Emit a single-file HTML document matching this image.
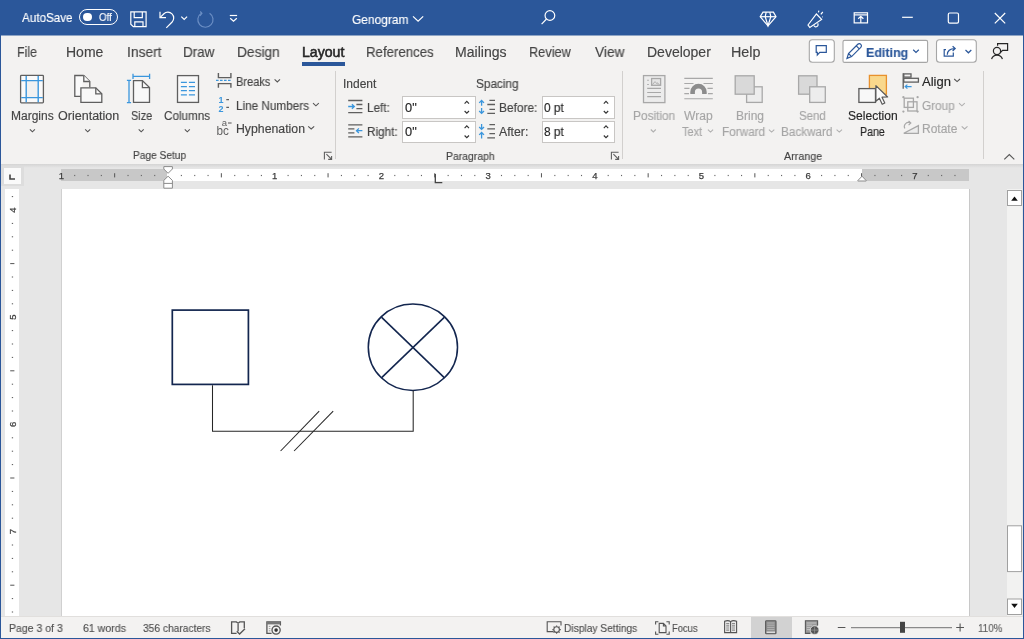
<!DOCTYPE html>
<html><head><meta charset="utf-8"><style>
html,body{margin:0;padding:0;width:1024px;height:639px;overflow:hidden;background:#f3f2f1;position:relative;font-family:"Liberation Sans", sans-serif}
.t{position:absolute;white-space:nowrap;line-height:1;font-family:"Liberation Sans", sans-serif;-webkit-text-stroke:0.15px currentColor;will-change:transform}
svg{overflow:visible}
</style></head><body>
<div style="position:absolute;left:0px;top:0px;width:1024px;height:35px;background:#2b579a"></div>
<div style="position:absolute;left:0px;top:35px;width:1024px;height:1px;background:#8fa5c5"></div>
<div style="position:absolute;left:0px;top:36px;width:1024px;height:128px;background:#f3f2f1"></div>
<div style="position:absolute;left:0px;top:164px;width:1024px;height:453px;background:#e6e6e6"></div>
<div style="position:absolute;left:0px;top:616px;width:1024px;height:23px;background:#f3f2f1"></div>
<div class="t" style="left:22.20px;top:12.00px;font-size:12.6px;color:#fff;font-weight:400;transform:scaleX(0.9266);transform-origin:0 0;">AutoSave</div>
<div style="position:absolute;left:79px;top:9px;width:38.6px;height:16.2px;border:1.2px solid #fff;border-radius:9px;box-sizing:border-box"></div>
<div style="position:absolute;left:83.4px;top:12.9px;width:8.2px;height:8.2px;background:#fff;border-radius:50%"></div>
<div class="t" style="left:98.60px;top:12.00px;font-size:10.6px;color:#fff;font-weight:400;transform:scaleX(0.9220);transform-origin:0 0;">Off</div>
<div class="t" style="left:351.70px;top:13.00px;font-size:13px;color:#fff;font-weight:400;transform:scaleX(0.9209);transform-origin:0 0;">Genogram</div>
<div class="t" style="left:17.31px;top:45.00px;font-size:14px;color:#444;font-weight:400;transform:scaleX(0.8864);transform-origin:0 0;">File</div>
<div class="t" style="left:66.40px;top:45.00px;font-size:14px;color:#444;font-weight:400;">Home</div>
<div class="t" style="left:126.52px;top:45.00px;font-size:14px;color:#444;font-weight:400;transform:scaleX(0.9846);transform-origin:0 0;">Insert</div>
<div class="t" style="left:183.04px;top:45.00px;font-size:14px;color:#444;font-weight:400;transform:scaleX(0.9613);transform-origin:0 0;">Draw</div>
<div class="t" style="left:237.22px;top:45.00px;font-size:14px;color:#444;font-weight:400;transform:scaleX(0.9810);transform-origin:0 0;">Design</div>
<div class="t" style="left:301.59px;top:45.00px;font-size:14px;color:#262626;font-weight:400;transform:scaleX(1.0062);transform-origin:0 0;-webkit-text-stroke:0.55px #262626">Layout</div>
<div class="t" style="left:365.75px;top:45.00px;font-size:14px;color:#444;font-weight:400;transform:scaleX(0.9463);transform-origin:0 0;">References</div>
<div class="t" style="left:455.30px;top:45.00px;font-size:14px;color:#444;font-weight:400;transform:scaleX(1.0049);transform-origin:0 0;">Mailings</div>
<div class="t" style="left:529.29px;top:45.00px;font-size:14px;color:#444;font-weight:400;transform:scaleX(0.9106);transform-origin:0 0;">Review</div>
<div class="t" style="left:595.20px;top:45.00px;font-size:14px;color:#444;font-weight:400;transform:scaleX(0.9780);transform-origin:0 0;">View</div>
<div class="t" style="left:646.51px;top:45.00px;font-size:14px;color:#444;font-weight:400;transform:scaleX(0.9944);transform-origin:0 0;">Developer</div>
<div class="t" style="left:731.28px;top:45.00px;font-size:14px;color:#444;font-weight:400;transform:scaleX(1.0212);transform-origin:0 0;">Help</div>
<div style="position:absolute;left:302px;top:62px;width:43px;height:4px;background:#2b579a"></div>
<div class="t" style="left:10.70px;top:110.00px;font-size:12px;color:#444;font-weight:400;">Margins</div>
<div class="t" style="left:57.60px;top:110.00px;font-size:12px;color:#444;font-weight:400;transform:scaleX(1.0444);transform-origin:0 0;">Orientation</div>
<div class="t" style="left:130.60px;top:110.00px;font-size:12px;color:#444;font-weight:400;transform:scaleX(0.9083);transform-origin:0 0;">Size</div>
<div class="t" style="left:164.40px;top:110.00px;font-size:12px;color:#444;font-weight:400;transform:scaleX(0.9736);transform-origin:0 0;">Columns</div>
<div class="t" style="left:236.00px;top:76.00px;font-size:12px;color:#444;font-weight:400;transform:scaleX(0.9211);transform-origin:0 0;">Breaks</div>
<div class="t" style="left:236.00px;top:100.00px;font-size:12px;color:#444;font-weight:400;transform:scaleX(0.9772);transform-origin:0 0;">Line Numbers</div>
<div class="t" style="left:236.00px;top:123.00px;font-size:12px;color:#444;font-weight:400;transform:scaleX(1.0239);transform-origin:0 0;">Hyphenation</div>
<div class="t" style="left:132.80px;top:150.00px;font-size:10.8px;color:#444;font-weight:400;transform:scaleX(0.9393);transform-origin:0 0;">Page Setup</div>
<div class="t" style="left:343.40px;top:78.00px;font-size:12px;color:#444;font-weight:400;">Indent</div>
<div class="t" style="left:367.00px;top:102.00px;font-size:12px;color:#444;font-weight:400;transform:scaleX(0.9733);transform-origin:0 0;">Left:</div>
<div class="t" style="left:367.00px;top:126.00px;font-size:12px;color:#444;font-weight:400;transform:scaleX(0.9770);transform-origin:0 0;">Right:</div>
<div class="t" style="left:476.30px;top:78.00px;font-size:12px;color:#444;font-weight:400;transform:scaleX(0.9815);transform-origin:0 0;">Spacing</div>
<div class="t" style="left:499.00px;top:102.00px;font-size:12px;color:#444;font-weight:400;transform:scaleX(0.9907);transform-origin:0 0;">Before:</div>
<div class="t" style="left:499.00px;top:126.00px;font-size:12px;color:#444;font-weight:400;transform:scaleX(1.0232);transform-origin:0 0;">After:</div>
<div class="t" style="left:446.40px;top:151.00px;font-size:10.8px;color:#444;font-weight:400;transform:scaleX(0.9640);transform-origin:0 0;">Paragraph</div>
<div class="t" style="left:633.30px;top:110.00px;font-size:12px;color:#a6a6a6;font-weight:400;transform:scaleX(0.9877);transform-origin:0 0;">Position</div>
<div class="t" style="left:684.20px;top:110.00px;font-size:12px;color:#a6a6a6;font-weight:400;transform:scaleX(1.0077);transform-origin:0 0;">Wrap</div>
<div class="t" style="left:682.30px;top:126.00px;font-size:12px;color:#a6a6a6;font-weight:400;transform:scaleX(0.9129);transform-origin:0 0;">Text</div>
<div class="t" style="left:735.50px;top:110.00px;font-size:12px;color:#a6a6a6;font-weight:400;">Bring</div>
<div class="t" style="left:721.80px;top:126.00px;font-size:12px;color:#a6a6a6;font-weight:400;transform:scaleX(0.9807);transform-origin:0 0;">Forward</div>
<div class="t" style="left:799.00px;top:110.00px;font-size:12px;color:#a6a6a6;font-weight:400;transform:scaleX(0.9542);transform-origin:0 0;">Send</div>
<div class="t" style="left:780.60px;top:126.00px;font-size:12px;color:#a6a6a6;font-weight:400;transform:scaleX(0.9767);transform-origin:0 0;">Backward</div>
<div class="t" style="left:847.50px;top:110.00px;font-size:12px;color:#262626;font-weight:400;transform:scaleX(1.0063);transform-origin:0 0;">Selection</div>
<div class="t" style="left:859.50px;top:126.00px;font-size:12px;color:#262626;font-weight:400;transform:scaleX(0.8853);transform-origin:0 0;">Pane</div>
<div class="t" style="left:922.00px;top:76.00px;font-size:12px;color:#262626;font-weight:400;transform:scaleX(1.0881);transform-origin:0 0;">Align</div>
<div class="t" style="left:922.00px;top:100.00px;font-size:12px;color:#a6a6a6;font-weight:400;transform:scaleX(0.9799);transform-origin:0 0;">Group</div>
<div class="t" style="left:922.00px;top:123.00px;font-size:12px;color:#a6a6a6;font-weight:400;">Rotate</div>
<div class="t" style="left:784.40px;top:151.00px;font-size:10.8px;color:#444;font-weight:400;transform:scaleX(0.9894);transform-origin:0 0;">Arrange</div>
<div style="position:absolute;left:402px;top:96px;width:73.5px;height:22.5px;background:#fff;border:1px solid #c8c6c4;box-sizing:border-box"></div>
<div class="t" style="left:404.60px;top:102.00px;font-size:12px;color:#262626;font-weight:400;transform:scaleX(1.0680);transform-origin:0 0;">0"</div>
<div style="position:absolute;left:402px;top:120.5px;width:73.5px;height:22.5px;background:#fff;border:1px solid #c8c6c4;box-sizing:border-box"></div>
<div class="t" style="left:404.60px;top:126.00px;font-size:12px;color:#262626;font-weight:400;transform:scaleX(1.0680);transform-origin:0 0;">0"</div>
<div style="position:absolute;left:541.5px;top:96px;width:73.5px;height:22.5px;background:#fff;border:1px solid #c8c6c4;box-sizing:border-box"></div>
<div class="t" style="left:544.40px;top:102.00px;font-size:12px;color:#262626;font-weight:400;transform:scaleX(0.9815);transform-origin:0 0;">0 pt</div>
<div style="position:absolute;left:541.5px;top:120.5px;width:73.5px;height:22.5px;background:#fff;border:1px solid #c8c6c4;box-sizing:border-box"></div>
<div class="t" style="left:544.40px;top:126.00px;font-size:12px;color:#262626;font-weight:400;transform:scaleX(0.9815);transform-origin:0 0;">8 pt</div>
<div style="position:absolute;left:335px;top:71px;width:1px;height:88px;background:#d2d0ce"></div>
<div style="position:absolute;left:622px;top:71px;width:1px;height:88px;background:#d2d0ce"></div>
<div style="position:absolute;left:983px;top:71px;width:1px;height:88px;background:#d2d0ce"></div>
<div style="position:absolute;left:0px;top:164px;width:1024px;height:4px;background:linear-gradient(#d4d4d4,#e6e6e6)"></div>
<div style="position:absolute;left:1px;top:166px;width:23px;height:20px;background:#dddddd"></div>
<div style="position:absolute;left:4px;top:167.5px;width:16.5px;height:16px;background:#fafafa"></div>
<div style="position:absolute;left:60.5px;top:168.5px;width:908.5px;height:12.5px;background:#fff"></div>
<div style="position:absolute;left:60.5px;top:168.5px;width:106px;height:12.5px;background:#c8c8c8"></div>
<div style="position:absolute;left:862px;top:168.5px;width:107px;height:12.5px;background:#c8c8c8"></div>
<div style="position:absolute;left:5px;top:189px;width:14px;height:427px;background:#fff"></div>
<div style="position:absolute;left:61px;top:189px;width:1px;height:427px;background:#d0d0d0"></div>
<div style="position:absolute;left:62px;top:189px;width:907px;height:427px;background:#fff"></div>
<div style="position:absolute;left:969px;top:189px;width:1px;height:427px;background:#c8c8c8"></div>
<div style="position:absolute;left:1007px;top:189px;width:15px;height:427px;background:#f2f2f1"></div>
<div style="position:absolute;left:0px;top:616px;width:1024px;height:1px;background:#e1dfdd"></div>
<div class="t" style="left:9.40px;top:623.00px;font-size:11px;color:#505050;font-weight:400;transform:scaleX(0.9546);transform-origin:0 0;">Page 3 of 3</div>
<div class="t" style="left:82.60px;top:623.00px;font-size:11px;color:#505050;font-weight:400;transform:scaleX(0.9616);transform-origin:0 0;">61 words</div>
<div class="t" style="left:143.00px;top:623.00px;font-size:11px;color:#505050;font-weight:400;transform:scaleX(0.9282);transform-origin:0 0;">356 characters</div>
<div class="t" style="left:563.70px;top:623.00px;font-size:11px;color:#505050;font-weight:400;transform:scaleX(0.9286);transform-origin:0 0;">Display Settings</div>
<div class="t" style="left:672.00px;top:623.00px;font-size:11px;color:#505050;font-weight:400;transform:scaleX(0.8537);transform-origin:0 0;">Focus</div>
<div class="t" style="left:978.20px;top:623.00px;font-size:11px;color:#5e5e5e;font-weight:400;transform:scaleX(0.8934);transform-origin:0 0;">110%</div>
<div style="position:absolute;left:751px;top:617px;width:40.5px;height:21px;background:#d2d2d2"></div>
<div style="position:absolute;left:0px;top:35px;width:1px;height:604px;background:#2b579a"></div>
<div style="position:absolute;left:1022.5px;top:35px;width:1.5px;height:604px;background:#2b579a"></div>
<div style="position:absolute;left:0px;top:638px;width:1024px;height:1px;background:#2b579a"></div>
<svg style="position:absolute;left:0;top:0" width="1024" height="639">
<!-- ===== title bar ===== -->
<g fill="none" stroke="#fff" stroke-width="1.2">
  <!-- save -->
  <path d="M130.8,11.9 H146.1 V26.7 H133.3 L130.8,24.2 Z"/>
  <path d="M134.2,11.9 V17.6 H142.3 V11.9"/>
  <path d="M134.8,26.7 V21.9 H143 V26.7"/>
  <!-- undo -->
  <path d="M160,11.8 V17.7 H166"/>
  <path d="M160,17.7 L163.9,13.8 A5.8,5.8 0 0 1 172.1,22 L166.3,27.8"/>
  <!-- chevron -->
  <path d="M181.3,16.6 L184.2,19.5 L187.1,16.6"/>
  <!-- QAT -->
  <path d="M229.8,15.5 H237.1"/>
  <path d="M230.2,18.2 L233.5,21.3 L236.8,18.2"/>
  <!-- genogram chevron -->
  <path d="M413,16.4 L418.1,21.2 L423.2,16.4"/>
  <!-- search -->
  <circle cx="549.9" cy="15.5" r="4.85"/>
  <path d="M546.5,19 L541.6,24.2"/>
  <!-- diamond -->
  <path d="M763,12.1 H773.4 L776,16.7 L768,25.8 L760.2,16.7 Z"/>
  <path d="M760.2,16.7 H776"/>
  <path d="M766.2,12.1 L765.2,16.7 L768,25.8 L770.8,16.7 L769.8,12.1"/>
  <!-- megaphone -->
  <g transform="translate(0,1.2)">
  <path d="M808,23.8 L816.4,12.8 L821.6,18.2 L809.8,26.2 Z"/>
  <path d="M813.8,24.2 A2.2,2.2 0 1 0 817.6,22.1"/>
  <path d="M818.4,11.2 L818.9,9.4 M820.8,13.2 L822.8,10.8 M822.2,15.6 L822.8,15.6"/>
  </g>
  <!-- ribbon display options -->
  <rect x="854.2" y="12.8" width="13.3" height="10.1"/>
  <path d="M854.2,14.9 H867.5"/>
  <path d="M860.8,22.9 V16.3 M858.2,18.8 L860.8,16.3 L863.4,18.8"/>
  <!-- window controls -->
  <path d="M902.1,17.3 H912.8"/>
  <rect x="948.3" y="13" width="10.2" height="10.2" rx="1.4"/>
  <path d="M994.8,13 L1005.2,23.4 M1005.2,13 L994.8,23.4"/>
</g>
<g fill="none" stroke="#6b8ec4" stroke-width="1.2">
  <!-- redo disabled -->
  <path d="M201.4,13.2 A7.6,7.6 0 1 0 209.6,13.3"/>
  <path d="M200.2,11.5 L201.9,13.3 L199.9,15.8"/>
</g>

<!-- ===== tab row right buttons ===== -->
<rect x="809.3" y="39.8" width="25" height="22.4" rx="3" fill="#fff" stroke="#a6a6a6" stroke-width="1.1"/>
<rect x="843" y="40.4" width="84.6" height="22" rx="1.5" fill="#fff" stroke="#a6a6a6" stroke-width="1.1"/>
<rect x="936.5" y="39.8" width="39.8" height="22.4" rx="3" fill="#fff" stroke="#a6a6a6" stroke-width="1.1"/>
<g fill="none" stroke="#2b579a" stroke-width="1.2">
  <path d="M816.2,45.6 H826.3 V52.4 H819.8 L817.3,55 V52.4 H816.2 Z"/>
  <path d="M847,58.4 L848.5,53.5 L857.8,44.3 A2,2 0 0 1 860.8,47.3 L851.6,56.6 Z M848.5,53.5 L851.6,56.6 M856.3,45.8 L859.3,48.8"/>
  <path d="M913.2,49.8 L916,52.4 L918.8,49.8"/>
  <path d="M946,49.6 H944.2 V56.2 H953.3 V52.6"/>
  <path d="M947.3,54.8 C947.3,50.3 950.5,48.6 955,48.6 M952.6,46.2 L955.2,48.6 L952.6,51"/>
  <path d="M965.5,50 L968.4,52.8 L971.3,50"/>
</g>
<g fill="none" stroke="#262626" stroke-width="1.2">
  <circle cx="997" cy="51" r="3.6"/>
  <path d="M991.6,59.2 A5.6,5.6 0 0 1 1002.4,59.2"/>
  <path d="M997.6,45.8 V43.6 H1007.6 V50.4 H1002.6 L1000.6,52.4 V50.4"/>
</g>

<!-- ===== Page Setup icons ===== -->
<g fill="none" stroke-width="1.3">
  <!-- margins -->
  <rect x="20.6" y="75.4" width="22.8" height="27.4" rx="0.8" fill="#fafafa" stroke="#5f5f5f"/>
  <rect x="26.5" y="80.9" width="11.2" height="16.4" fill="#f1f1f1" stroke="none"/>
  <path d="M26.2,76 V102.2 M38.2,76 V102.2 M21.2,80.6 H42.8 M21.2,97.6 H42.8" stroke="#3a96dd" stroke-width="1.4"/>
  <!-- orientation -->
  <path d="M83.8,75.5 H74.8 V96.3 H80.6" stroke="#5f5f5f" fill="#fafafa"/>
  <path d="M83.8,75.5 L89.8,81.5 V87.4" stroke="#5f5f5f"/>
  <path d="M83.8,75.5 V81.5 H89.8" stroke="#5f5f5f" fill="#fafafa"/>
  <path d="M80.9,87.8 H95.8 L101.8,93.8 V102.4 H80.9 Z" stroke="#5f5f5f" fill="#f8f8f8"/>
  <path d="M95.8,87.8 V93.8 H101.8" stroke="#5f5f5f"/>
  <!-- size -->
  <path d="M133.5,80.6 H142.4 L149.5,87.6 V102.4 H133.5 Z" stroke="#5f5f5f" fill="#f8f8f8"/>
  <path d="M142.4,80.6 V87.6 H149.5" stroke="#5f5f5f"/>
  <path d="M133,76.4 H149.6 M133,73.8 V79 M149.6,73.8 V79" stroke="#3a96dd" stroke-width="1.3"/>
  <path d="M129,80.4 V102.6 M126.9,80.4 H131.1 M126.9,102.6 H131.1" stroke="#3a96dd" stroke-width="1.3"/>
  <!-- columns -->
  <rect x="177.5" y="75.6" width="21" height="26.8" fill="#f8f8f8" stroke="#5f5f5f"/>
  <path d="M180.9,82.4 H186.9 M188.9,82.4 H195 M180.9,86.6 H186.9 M188.9,86.6 H195 M180.9,90.7 H186.9 M188.9,90.7 H195 M180.9,94.8 H186.9 M188.9,94.8 H195" stroke="#3a96dd" stroke-width="1.3"/>
  <!-- breaks -->
  <path d="M218.4,73 V77.6 H230.9 V73" stroke="#5f5f5f" stroke-width="1.4"/>
  <path d="M218.4,87.8 V83.6 H230.9 V87.8" stroke="#5f5f5f" stroke-width="1.4"/>
  <path d="M216,80.4 H231.8" stroke="#3a96dd" stroke-width="1.2" stroke-dasharray="2.6,1.4"/>
  <!-- line numbers dashes -->
  <path d="M226.3,99.7 H229 M226.3,107.4 H229" stroke="#5f5f5f" stroke-width="1.3"/>
  <path d="M222.8,120.6 V120.6" stroke="none"/>
  <!-- hyphenation dash -->
  <path d="M228,123 H231.6" stroke="#5f5f5f" stroke-width="1.1"/>
</g>
<text x="218.4" y="103" font-family="Liberation Sans" font-size="9" font-weight="700" fill="#3a96dd">1</text>
<text x="218.4" y="111.8" font-family="Liberation Sans" font-size="9" font-weight="700" fill="#3a96dd">2</text>
<text x="221.8" y="126.4" font-family="Liberation Sans" font-size="9.5" fill="#5f5f5f">a</text>
<text x="216.4" y="134.9" font-family="Liberation Sans" font-size="12.2" fill="#5f5f5f" textLength="12.4" lengthAdjust="spacingAndGlyphs">bc</text>
<!-- dialog launchers -->
<g fill="none" stroke="#5f5f5f" stroke-width="1.1">
  <path d="M324.4,159.4 V152.2 H331.6 M326.4,154.2 L331.4,159.2 M328.2,159.4 H331.6 V156"/>
  <path d="M611.4,159.4 V152.2 H618.6 M613.4,154.2 L618.4,159.2 M615.2,159.4 H618.6 V156"/>
</g>

<!-- ===== Paragraph icons ===== -->
<g fill="none" stroke="#5f5f5f" stroke-width="1.3">
  <path d="M348.2,100.5 H362.4 M356.4,104.5 H362.4 M356.4,108.6 H362.4 M348.2,112.6 H362.4"/>
  <path d="M348.2,124.8 H362.4 M348.2,128.8 H354.4 M348.2,132.9 H354.4 M348.2,136.9 H362.4"/>
  <path d="M489.4,100.3 H495 M487.3,104.5 H495 M489.4,109.3 H495 M487.3,113.4 H495"/>
  <path d="M489.4,124.7 H495 M487.3,128.8 H495 M489.4,133.6 H495 M487.3,137.8 H495"/>
</g>
<g fill="none" stroke="#3a96dd" stroke-width="1.3">
  <path d="M348.2,106.5 H354.2 M351.9,104.2 L354.3,106.5 L351.9,108.8"/>
  <path d="M362.4,130.7 H356.6 M358.9,128.4 L356.5,130.7 L358.9,133"/>
  <path d="M481.6,100.6 V105.8 M479.2,102.9 L481.6,100.5 L484,102.9"/>
  <path d="M481.6,108.1 V113.3 M479.2,111 L481.6,113.4 L484,111"/>
  <path d="M481.6,124.1 V129.3 M479.2,127 L481.6,129.4 L484,127"/>
  <path d="M481.6,132.6 V138.5 M479.2,134.9 L481.6,132.5 L484,134.9"/>
</g>
<!-- spinner arrows -->
<g fill="none" stroke="#333" stroke-width="1.15">
  <path d="M464.6,103.6 L466.8,101.4 L469,103.6 M464.6,111 L466.8,113.2 L469,111"/>
  <path d="M464.6,128.1 L466.8,125.9 L469,128.1 M464.6,135.5 L466.8,137.7 L469,135.5"/>
  <path d="M603.8,103.6 L606,101.4 L608.2,103.6 M603.8,111 L606,113.2 L608.2,111"/>
  <path d="M603.8,128.1 L606,125.9 L608.2,128.1 M603.8,135.5 L606,137.7 L608.2,135.5"/>
</g>

<!-- ===== ribbon chevrons ===== -->
<g fill="none" stroke="#555" stroke-width="1.1">
  <path d="M29.9,129.3 L32.4,131.8 L34.9,129.3"/>
  <path d="M85.2,129.3 L87.7,131.8 L90.2,129.3"/>
  <path d="M138.7,129.3 L141.2,131.8 L143.7,129.3"/>
  <path d="M184.8,129.3 L187.3,131.8 L189.8,129.3"/>
  <path d="M274.6,79.4 L277.3,82 L280,79.4"/>
  <path d="M313,103.2 L315.9,105.8 L318.8,103.2"/>
  <path d="M308.2,126.3 L311.2,128.9 L314.2,126.3"/>
  <path d="M954.2,79 L957.1,81.6 L960,79"/>
  <path d="M1004.3,159.4 L1009.3,154.6 L1014.3,159.4"/>
</g>
<g fill="none" stroke="#b0b0b0" stroke-width="1.1">
  <path d="M650.8,129.5 L653.3,132 L655.8,129.5"/>
  <path d="M707.9,129.6 L710.5,132.1 L713.1,129.6"/>
  <path d="M768.9,129.6 L771.6,132.1 L774.3,129.6"/>
  <path d="M836.6,129.6 L839.3,132.1 L842,129.6"/>
  <path d="M959,103.2 L961.9,105.8 L964.8,103.2"/>
  <path d="M961.7,126.3 L964.6,128.9 L967.5,126.3"/>
</g>

<!-- ===== Arrange icons ===== -->
<g fill="none" stroke="#a8a8a8" stroke-width="1.3">
  <rect x="643.5" y="75.6" width="21.4" height="27" fill="#ececec"/>
  <rect x="651.6" y="78.5" width="9" height="6.8" fill="#e4e4e4"/>
  <path d="M652.4,84.6 L655,81.6 L657.6,84.4 M657,82.6 L659.6,84.8" stroke-width="0.9"/>
  <path d="M647.2,80.2 H648.8 M647.2,84.5 H648.8 M647.2,88.4 H661 M647.2,92.5 H661 M647.2,96.6 H661" stroke-width="1.1"/>
  <!-- wrap text -->
  <path d="M684.3,78.4 H712.8 M684.3,83.5 H693.5 M703.5,83.5 H712.8 M684.3,88.4 H689.5 M707.5,88.4 H712.8 M684.3,93.6 H689 M708,93.6 H712.8 M684.3,98.8 H712.8" stroke-width="1.1"/>
  <path d="M692.6,94 V92 A5.9,5.9 0 0 1 704.4,92 V94" stroke="#8c8c8c" stroke-width="4.6"/>
  <!-- bring forward -->
  <rect x="746.6" y="86.8" width="15.6" height="15.6" fill="#ededed"/>
  <rect x="735.2" y="75.8" width="19" height="18.4" fill="#d9d9d9"/>
  <!-- send backward -->
  <rect x="798.6" y="75.8" width="18.4" height="18.4" fill="#d9d9d9"/>
  <rect x="809.7" y="86.8" width="15.6" height="15.6" fill="#ededed"/>
  <!-- group -->
  <rect x="904.2" y="98.2" width="9.2" height="9.2" stroke-width="1.3"/>
  <rect x="907.8" y="101.8" width="9.2" height="9.2" stroke-width="1.3"/>
  <!-- rotate -->
  <path d="M903.8,133.3 L918.4,125.6 V133.3 Z" stroke-width="1.3" fill="#ececec"/>
  <path d="M904.8,128.6 A4.2,4.2 0 0 1 910.6,123 M908.6,120.8 L910.9,123 L908.6,125.2" stroke-width="1.1"/>
</g>
<g fill="#a8a8a8">
  <circle cx="903.4" cy="97.2" r="1.15"/><circle cx="917.6" cy="97.2" r="1.15"/><circle cx="903.4" cy="111.6" r="1.15"/><circle cx="917.6" cy="111.6" r="1.15"/>
</g>
<!-- selection pane -->
<rect x="869.4" y="75.4" width="17" height="18.8" fill="#f9d88c" stroke="#e8912d" stroke-width="1.3"/>
<rect x="858.9" y="88.6" width="16.6" height="13.8" fill="#f8f8f8" stroke="#5a5a5a" stroke-width="1.3"/>
<path d="M875.9,85.6 V101.2 L879.4,98.2 L882.2,104.3 L884.8,103 L882,97.2 L887.6,97 Z" fill="#fbfbfb" stroke="#5a5a5a" stroke-width="1.2" stroke-linejoin="round"/>
<!-- align -->
<g fill="none" stroke="#5f5f5f" stroke-width="1.3">
  <path d="M903.2,73.2 V88.8"/>
  <rect x="903.8" y="73.9" width="7.2" height="3.2"/>
  <rect x="903.8" y="78.3" width="14.6" height="3.8"/>
</g>
<path d="M911.6,86.6 H905.2 M907.4,84.6 L905.2,86.6 L907.4,88.6" fill="none" stroke="#3a96dd" stroke-width="1.2"/>

<!-- ===== status bar icons ===== -->
<g fill="none" stroke="#555" stroke-width="1.1">
  <!-- proofing book -->
  <path d="M236.6,633.4 H231.6 V621.9 H236.4 L238.1,623.2 L239.8,621.9 H244.3 V628.2 M238.1,623.2 V631.2" stroke-width="1.3"/>
  <path d="M236.8,631.2 L239.6,634 L245,628.8" stroke-width="1.3"/>
  <!-- accessibility -->
  <path d="M271.6,633.4 H266.9 V622 H280.4 V625.4" stroke-width="1.3"/>
  <rect x="266.9" y="622" width="13.5" height="2.4" fill="#777" stroke="none"/>
  <path d="M268.8,626.4 H270.4 M268.8,628.6 H270.4 M268.8,630.8 H270.4" stroke="#999" stroke-width="0.9"/>
  <circle cx="276.1" cy="630.1" r="4.1" fill="#f3f2f1" stroke-width="1.3"/>
  <circle cx="276.1" cy="630.1" r="1.8" fill="#333" stroke="none"/>
  <!-- display settings -->
  <path d="M553.6,631.6 H547.2 V621.8 H561 V625.6"/>
  <circle cx="556.6" cy="629.6" r="2.8"/>
  <path d="M556.6,625.4 V626.6 M556.6,632.6 V633.8 M552.4,629.6 H553.6 M559.6,629.6 H560.8 M553.6,626.6 L554.4,627.4 M558.8,631.8 L559.6,632.6 M553.6,632.6 L554.4,631.8 M558.8,627.4 L559.6,626.6"/>
  <!-- focus -->
  <path d="M655.6,624.6 V621.8 H658.4 M666.4,621.8 H669.2 V624.6 M669.2,631.4 V634.2 H666.4 M658.4,634.2 H655.6 V631.4"/>
  <path d="M659.2,623.4 H663.4 L666,626 V632.6 H659.2 Z M663.4,623.4 V626 H666"/>
  <!-- read mode -->
  <path d="M724.6,621.2 C727,620.4 729.2,620.6 730.6,621.6 C732,620.6 734.2,620.4 736.6,621.2 V632.6 H724.6 Z M730.6,621.6 V633.2" stroke="#555" stroke-width="1.1" fill="#eaeaea"/>
  <path d="M726.2,623.6 H729.2 M726.2,625.8 H729.2 M726.2,628 H729.2 M726.2,630.2 H729.2 M732,623.6 H735 M732,625.8 H735 M732,628 H735 M732,630.2 H735" stroke="#8a8a8a" stroke-width="1.2"/>
  <!-- print layout -->
  <rect x="765.6" y="620.8" width="10.4" height="13" rx="0.8" fill="#8e8e8e" stroke="#5a5a5a" stroke-width="1.1"/>
  <path d="M767.2,623 H774.4 M767.2,625.2 H774.4 M767.2,627.4 H774.4 M767.2,629.6 H774.4" stroke="#bdbdbd" stroke-width="0.8"/>
  <path d="M766.6,632.2 H775" stroke="#f0f0f0" stroke-width="1.2"/>
  <!-- web layout -->
  <path d="M810.4,633.4 H805.4 V620.8 H817.6 V625.4" stroke="#5a5a5a" stroke-width="1.1" fill="#9a9a9a"/>
  <path d="M806.8,623 H816.2 M806.8,625.2 H812 M806.8,627.4 H810 M806.8,629.6 H810" stroke="#c8c8c8" stroke-width="0.9"/>
  <circle cx="814.6" cy="630.1" r="4.4" fill="#555" stroke="#f3f2f1" stroke-width="0.8"/>
  <path d="M814.6,626.4 V633.8 M811,630.1 H818.2" stroke="#999" stroke-width="0.7"/>
  <!-- zoom -->
  <path d="M837.8,627.5 H845.4 M956.2,627.5 H964 M960.1,623.6 V631.4"/>
</g>
<path d="M851,627.6 H952" stroke="#8a8a8a" stroke-width="1.2"/>
<rect x="900" y="621.8" width="5" height="11" fill="#444"/>
<text x="61.30" y="178.6" font-family="Liberation Sans" font-size="9.5" fill="#3c3c3c" stroke="#3c3c3c" stroke-width="0.25" text-anchor="middle">1</text>
<rect x="74.14" y="174.9" width="1.1" height="1.2" fill="#666"/>
<rect x="87.47" y="174.9" width="1.1" height="1.2" fill="#666"/>
<rect x="100.81" y="174.9" width="1.1" height="1.2" fill="#666"/>
<rect x="114.15" y="173.2" width="1" height="4.2" fill="#555"/>
<rect x="127.49" y="174.9" width="1.1" height="1.2" fill="#666"/>
<rect x="140.82" y="174.9" width="1.1" height="1.2" fill="#666"/>
<rect x="154.16" y="174.9" width="1.1" height="1.2" fill="#666"/>
<rect x="180.84" y="174.9" width="1.1" height="1.2" fill="#666"/>
<rect x="194.18" y="174.9" width="1.1" height="1.2" fill="#666"/>
<rect x="207.51" y="174.9" width="1.1" height="1.2" fill="#666"/>
<rect x="220.85" y="173.2" width="1" height="4.2" fill="#555"/>
<rect x="234.19" y="174.9" width="1.1" height="1.2" fill="#666"/>
<rect x="247.53" y="174.9" width="1.1" height="1.2" fill="#666"/>
<rect x="260.86" y="174.9" width="1.1" height="1.2" fill="#666"/>
<text x="274.70" y="178.6" font-family="Liberation Sans" font-size="9.5" fill="#3c3c3c" stroke="#3c3c3c" stroke-width="0.25" text-anchor="middle">1</text>
<rect x="287.54" y="174.9" width="1.1" height="1.2" fill="#666"/>
<rect x="300.88" y="174.9" width="1.1" height="1.2" fill="#666"/>
<rect x="314.21" y="174.9" width="1.1" height="1.2" fill="#666"/>
<rect x="327.55" y="173.2" width="1" height="4.2" fill="#555"/>
<rect x="340.89" y="174.9" width="1.1" height="1.2" fill="#666"/>
<rect x="354.23" y="174.9" width="1.1" height="1.2" fill="#666"/>
<rect x="367.56" y="174.9" width="1.1" height="1.2" fill="#666"/>
<text x="381.40" y="178.6" font-family="Liberation Sans" font-size="9.5" fill="#3c3c3c" stroke="#3c3c3c" stroke-width="0.25" text-anchor="middle">2</text>
<rect x="394.24" y="174.9" width="1.1" height="1.2" fill="#666"/>
<rect x="407.58" y="174.9" width="1.1" height="1.2" fill="#666"/>
<rect x="420.91" y="174.9" width="1.1" height="1.2" fill="#666"/>
<rect x="434.25" y="173.2" width="1" height="4.2" fill="#555"/>
<rect x="447.59" y="174.9" width="1.1" height="1.2" fill="#666"/>
<rect x="460.93" y="174.9" width="1.1" height="1.2" fill="#666"/>
<rect x="474.26" y="174.9" width="1.1" height="1.2" fill="#666"/>
<text x="488.10" y="178.6" font-family="Liberation Sans" font-size="9.5" fill="#3c3c3c" stroke="#3c3c3c" stroke-width="0.25" text-anchor="middle">3</text>
<rect x="500.94" y="174.9" width="1.1" height="1.2" fill="#666"/>
<rect x="514.28" y="174.9" width="1.1" height="1.2" fill="#666"/>
<rect x="527.61" y="174.9" width="1.1" height="1.2" fill="#666"/>
<rect x="540.95" y="173.2" width="1" height="4.2" fill="#555"/>
<rect x="554.29" y="174.9" width="1.1" height="1.2" fill="#666"/>
<rect x="567.62" y="174.9" width="1.1" height="1.2" fill="#666"/>
<rect x="580.96" y="174.9" width="1.1" height="1.2" fill="#666"/>
<text x="594.80" y="178.6" font-family="Liberation Sans" font-size="9.5" fill="#3c3c3c" stroke="#3c3c3c" stroke-width="0.25" text-anchor="middle">4</text>
<rect x="607.64" y="174.9" width="1.1" height="1.2" fill="#666"/>
<rect x="620.98" y="174.9" width="1.1" height="1.2" fill="#666"/>
<rect x="634.31" y="174.9" width="1.1" height="1.2" fill="#666"/>
<rect x="647.65" y="173.2" width="1" height="4.2" fill="#555"/>
<rect x="660.99" y="174.9" width="1.1" height="1.2" fill="#666"/>
<rect x="674.33" y="174.9" width="1.1" height="1.2" fill="#666"/>
<rect x="687.66" y="174.9" width="1.1" height="1.2" fill="#666"/>
<text x="701.50" y="178.6" font-family="Liberation Sans" font-size="9.5" fill="#3c3c3c" stroke="#3c3c3c" stroke-width="0.25" text-anchor="middle">5</text>
<rect x="714.34" y="174.9" width="1.1" height="1.2" fill="#666"/>
<rect x="727.68" y="174.9" width="1.1" height="1.2" fill="#666"/>
<rect x="741.01" y="174.9" width="1.1" height="1.2" fill="#666"/>
<rect x="754.35" y="173.2" width="1" height="4.2" fill="#555"/>
<rect x="767.69" y="174.9" width="1.1" height="1.2" fill="#666"/>
<rect x="781.02" y="174.9" width="1.1" height="1.2" fill="#666"/>
<rect x="794.36" y="174.9" width="1.1" height="1.2" fill="#666"/>
<text x="808.20" y="178.6" font-family="Liberation Sans" font-size="9.5" fill="#3c3c3c" stroke="#3c3c3c" stroke-width="0.25" text-anchor="middle">6</text>
<rect x="821.04" y="174.9" width="1.1" height="1.2" fill="#666"/>
<rect x="834.38" y="174.9" width="1.1" height="1.2" fill="#666"/>
<rect x="847.71" y="174.9" width="1.1" height="1.2" fill="#666"/>
<rect x="861.05" y="173.2" width="1" height="4.2" fill="#555"/>
<rect x="874.39" y="174.9" width="1.1" height="1.2" fill="#666"/>
<rect x="887.73" y="174.9" width="1.1" height="1.2" fill="#666"/>
<rect x="901.06" y="174.9" width="1.1" height="1.2" fill="#666"/>
<text x="914.90" y="178.6" font-family="Liberation Sans" font-size="9.5" fill="#3c3c3c" stroke="#3c3c3c" stroke-width="0.25" text-anchor="middle">7</text>
<rect x="927.74" y="174.9" width="1.1" height="1.2" fill="#666"/>
<rect x="941.08" y="174.9" width="1.1" height="1.2" fill="#666"/>
<rect x="954.41" y="174.9" width="1.1" height="1.2" fill="#666"/>
<rect x="11.8" y="196.10" width="1.3" height="1" fill="#555"/>
<text x="0" y="0" transform="translate(15.6,210.00) rotate(-90)" font-family="Liberation Sans" font-size="9.5" fill="#3c3c3c" stroke="#3c3c3c" stroke-width="0.25" text-anchor="middle">4</text>
<rect x="11.8" y="222.90" width="1.3" height="1" fill="#555"/>
<rect x="11.8" y="236.30" width="1.3" height="1" fill="#555"/>
<rect x="11.8" y="249.70" width="1.3" height="1" fill="#555"/>
<rect x="10.2" y="263.10" width="4.2" height="1" fill="#555"/>
<rect x="11.8" y="276.50" width="1.3" height="1" fill="#555"/>
<rect x="11.8" y="289.90" width="1.3" height="1" fill="#555"/>
<rect x="11.8" y="303.30" width="1.3" height="1" fill="#555"/>
<text x="0" y="0" transform="translate(15.6,317.20) rotate(-90)" font-family="Liberation Sans" font-size="9.5" fill="#3c3c3c" stroke="#3c3c3c" stroke-width="0.25" text-anchor="middle">5</text>
<rect x="11.8" y="330.10" width="1.3" height="1" fill="#555"/>
<rect x="11.8" y="343.50" width="1.3" height="1" fill="#555"/>
<rect x="11.8" y="356.90" width="1.3" height="1" fill="#555"/>
<rect x="10.2" y="370.30" width="4.2" height="1" fill="#555"/>
<rect x="11.8" y="383.70" width="1.3" height="1" fill="#555"/>
<rect x="11.8" y="397.10" width="1.3" height="1" fill="#555"/>
<rect x="11.8" y="410.50" width="1.3" height="1" fill="#555"/>
<text x="0" y="0" transform="translate(15.6,424.40) rotate(-90)" font-family="Liberation Sans" font-size="9.5" fill="#3c3c3c" stroke="#3c3c3c" stroke-width="0.25" text-anchor="middle">6</text>
<rect x="11.8" y="437.30" width="1.3" height="1" fill="#555"/>
<rect x="11.8" y="450.70" width="1.3" height="1" fill="#555"/>
<rect x="11.8" y="464.10" width="1.3" height="1" fill="#555"/>
<rect x="10.2" y="477.50" width="4.2" height="1" fill="#555"/>
<rect x="11.8" y="490.90" width="1.3" height="1" fill="#555"/>
<rect x="11.8" y="504.30" width="1.3" height="1" fill="#555"/>
<rect x="11.8" y="517.70" width="1.3" height="1" fill="#555"/>
<text x="0" y="0" transform="translate(15.6,531.60) rotate(-90)" font-family="Liberation Sans" font-size="9.5" fill="#3c3c3c" stroke="#3c3c3c" stroke-width="0.25" text-anchor="middle">7</text>
<rect x="11.8" y="544.50" width="1.3" height="1" fill="#555"/>
<rect x="11.8" y="557.90" width="1.3" height="1" fill="#555"/>
<rect x="11.8" y="571.30" width="1.3" height="1" fill="#555"/>
<rect x="10.2" y="584.70" width="4.2" height="1" fill="#555"/>
<rect x="11.8" y="598.10" width="1.3" height="1" fill="#555"/>
<rect x="11.8" y="611.50" width="1.3" height="1" fill="#555"/>
<path d="M163.8,166.6 H172.4 V169 L168.1,173.3 L163.8,169 Z M168.1,176.2 L163.8,180.4 V188.2 H172.4 V180.4 Z" fill="#fff" stroke="#8a8a8a" stroke-width="1"/>
<path d="M163.8,183.4 H172.4" stroke="#8a8a8a" stroke-width="1"/>
<path d="M862,176.2 L857.8,180.6 V181 H866.2 V180.6 Z" fill="#fff" stroke="#8a8a8a" stroke-width="1"/>
<path d="M435.3,174 V182.7 H442.3" fill="none" stroke="#444" stroke-width="1.3"/>
<path d="M10,174.4 V179 H15" fill="none" stroke="#444" stroke-width="1.6"/>
<rect x="1007.5" y="190.5" width="14" height="15" fill="#fff" stroke="#a0a0a0" stroke-width="1"/>
<path d="M1011.2,200.8 L1014.5,196.6 L1017.8,200.8 Z" fill="#111"/>
<rect x="1007.5" y="525.8" width="14" height="45.8" fill="#fff" stroke="#a0a0a0" stroke-width="1"/>
<rect x="1007.5" y="599" width="14" height="15.5" fill="#fff" stroke="#a0a0a0" stroke-width="1"/>
<path d="M1011.2,603.8 L1014.5,608 L1017.8,603.8 Z" fill="#111"/></svg>
<div class="t" style="left:865.60px;top:46.00px;font-size:13px;color:#2b579a;font-weight:700;transform:scaleX(0.9591);transform-origin:0 0;">Editing</div>
<svg style="position:absolute;left:0;top:0" width="1024" height="639">
<rect x="172.3" y="310.1" width="76.1" height="74.3" fill="none" stroke="#13264f" stroke-width="1.7"/>
<ellipse cx="412.9" cy="347.2" rx="44.6" ry="43.3" fill="none" stroke="#13264f" stroke-width="1.55"/>
<line x1="381.4" y1="317.2" x2="444.5" y2="377.8" stroke="#13264f" stroke-width="1.6"/>
<line x1="444.5" y1="317.2" x2="381.4" y2="377.8" stroke="#13264f" stroke-width="1.6"/>
<polyline points="212.5,385.2 212.5,431.2 413.2,431.2 413.2,390.6" fill="none" stroke="#262626" stroke-width="1.05"/>
<line x1="280.6" y1="451" x2="319.2" y2="411.2" stroke="#262626" stroke-width="1.05"/>
<line x1="294.1" y1="451" x2="333.2" y2="411.2" stroke="#262626" stroke-width="1.05"/>
</svg>
</body></html>
